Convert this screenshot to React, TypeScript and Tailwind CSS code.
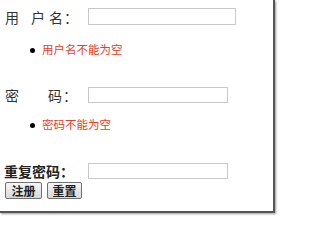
export default function App() {
  const font = { fontFamily: '"Noto Sans CJK SC", "Noto Sans", sans-serif' };
  return (
    <div className="w-[278px] h-[216px] bg-white relative overflow-hidden" style={font}>
      <div className="w-[275px] h-[213px] border-r-[2px] border-b-[2px] border-[#555] shadow-[1px_1px_2px_rgba(0,0,0,0.4)] flex flex-col">
        {/* row 1 */}
        <div className="mt-[8px] h-[17px] flex items-center">
          <div className="w-[88px] pl-[5px] flex items-center text-[14px] leading-none text-[#333]">
            <span>用</span>
            <span className="ml-[12px]">户</span>
            <span className="ml-[4px]">名</span>
            <span className="ml-[1px]">：</span>
          </div>
          <div className="w-[148px] h-[17px] border border-[#c8c8c8] bg-white"></div>
        </div>
        <div className="mt-[17px] h-[16px] flex items-center pl-[30px] text-[11.5px] leading-none">
          <span className="w-[5px] h-[5px] rounded-full bg-black"></span>
          <span className="ml-[7px] text-[#e0422a]">用户名不能为空</span>
        </div>
        {/* row 2 */}
        <div className="mt-[29px] h-[16px] flex items-center">
          <div className="w-[88px] pl-[5px] flex items-center text-[14px] leading-none text-[#333]">
            <span>密</span>
            <span className="ml-[29px]">码</span>
            <span className="ml-[1px]">：</span>
          </div>
          <div className="w-[140px] h-[16px] border border-[#c8c8c8] bg-white"></div>
        </div>
        <div className="mt-[14px] h-[16px] flex items-center pl-[30px] text-[11.5px] leading-none">
          <span className="w-[5px] h-[5px] rounded-full bg-black"></span>
          <span className="ml-[7px] text-[#e0422a]">密码不能为空</span>
        </div>
        {/* row 3 */}
        <div className="mt-[30px] h-[16px] flex items-center">
          <div className="w-[88px] pl-[4px] text-[14px] leading-none text-[#222] font-bold">
            重复密码：
          </div>
          <div className="w-[140px] h-[16px] border border-[#c8c8c8] bg-white"></div>
        </div>
        <div className="mt-[3px] flex gap-[5px] pl-[5px]">
          <button className="w-[37px] h-[17px] flex items-center justify-center text-[12px] leading-none font-bold text-[#222] border border-[#707070] rounded-[2px] bg-gradient-to-b from-[#f6f6f6] to-[#d8d8d8]">
            注册
          </button>
          <button className="w-[35px] h-[17px] flex items-center justify-center text-[12px] leading-none font-bold text-[#222] border border-[#707070] rounded-[2px] bg-gradient-to-b from-[#f6f6f6] to-[#d8d8d8]">
            重置
          </button>
        </div>
      </div>
    </div>
  );
}
